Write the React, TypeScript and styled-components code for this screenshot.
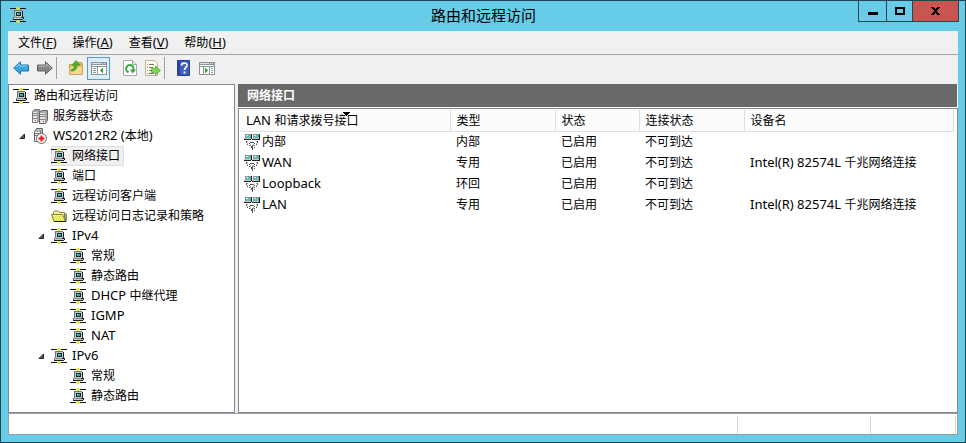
import React from 'react';
import styled, { createGlobalStyle, css } from 'styled-components';

const GlobalStyle = createGlobalStyle`
  *, *::before, *::after { box-sizing: border-box; }
  body {
    margin: 0;
    font-family: "Noto Sans", "Noto Sans CJK SC", sans-serif;
    font-size: 12px;
    line-height: 20px;
    color: #000;
  }
  button { font: inherit; color: inherit; border: 0; padding: 0; background: none; }
`;

const WindowFrame = styled.div`
  display: flex;
  flex-direction: column;
  min-height: 100vh;
  padding: 0 7px 7px;
  background: #66cce8;
  border: 1px solid #23434f;
`;

const TitleBar = styled.header`
  display: grid;
  grid-template-columns: 1fr auto 1fr;
  flex: none;
  height: 30px;
  margin-right: -1px;
`;

const AppIcon = styled.div`
  display: flex;
  padding: 6px 2px;
`;

const Title = styled.h1`
  margin: 0;
  font-size: 15px;
  font-weight: 400;
  line-height: 28px;
`;

const Caption = styled.div`
  display: flex;
  justify-content: flex-end;
  height: 21px;
`;

const CaptionButton = styled.button<{ $width: number; $close?: boolean }>`
  display: flex;
  align-items: center;
  justify-content: center;
  width: ${p => p.$width}px;
  margin-left: -1px;
  border: 1px solid #2b4550;
  border-top: 0;
  background: ${p => (p.$close ? '#c6564f' : 'transparent')};
`;

const Client = styled.div`
  display: flex;
  flex-direction: column;
  flex: 1;
  background: #f0f0f0;
`;

const MenuBar = styled.nav`
  display: flex;
  height: 24px;
  padding-left: 2px;
  border-bottom: 1px solid #a5a5a5;
`;

const MenuButton = styled.button`
  padding: 0 8px;
  line-height: 23px;
`;

const ToolBar = styled.div`
  display: flex;
  align-items: center;
  height: 29px;
  padding: 0 2px 3px;
`;

const ToolGroup = styled.div`
  display: flex;

  & + & { margin-left: 8px; }
`;

const ToolButton = styled.button<{ $pressed?: boolean }>`
  display: flex;
  align-items: center;
  justify-content: center;
  width: 23px;
  height: 23px;
  ${p =>
    p.$pressed &&
    css`
      border: 1px solid #4e9fd0;
      background: #dcecf8;
    `}
`;

const ToolDivider = styled.span`
  width: 1px;
  height: 22px;
  margin-right: 7px;
  background: #a0a0a0;
`;

const Panes = styled.main`
  display: grid;
  grid-template-columns: 227px minmax(0, 1fr);
  gap: 3px;
  flex: 1;
`;

const TreePane = styled.div`
  padding: 1px 0;
  background: #fff;
  border: 1px solid #828790;
`;

const TreeList = styled.ul`
  margin: 0;
  padding: 0;
  list-style: none;
`;

const TreeRow = styled.li<{ $depth: number }>`
  display: flex;
  align-items: center;
  height: 20px;
  padding-left: ${p => (p.$depth === 0 ? 4 : p.$depth * 19 - 15)}px;
`;

const Expander = styled.span`
  display: flex;
  justify-content: center;
  width: 19px;
`;

const TreeLabel = styled.span<{ $selected?: boolean }>`
  display: flex;
  align-items: center;
  gap: 5px;
  height: 20px;
  padding-right: 4px;
  white-space: nowrap;
  background: ${p => (p.$selected ? '#f0f0f0' : 'transparent')};
  box-shadow: ${p => (p.$selected ? 'inset 0 0 0 1px #dedede' : 'none')};
`;

const DetailPane = styled.section`
  display: flex;
  flex-direction: column;
  min-width: 0;
  background: #fff;
`;

const DetailTitle = styled.h2`
  height: 23px;
  margin: 0 1px 1px 0;
  padding-left: 9px;
  font-size: 12px;
  font-weight: 700;
  line-height: 23px;
  color: #fff;
  background: #696969;
`;

const ListView = styled.div`
  flex: 1;
  padding: 1px 3px 0 1px;
  border: 1px solid #828790;
`;

const Table = styled.table`
  width: 100%;
  table-layout: fixed;
  border-collapse: collapse;
`;

const Column = styled.col<{ $width?: number }>`
  width: ${p => (p.$width ? `${p.$width}px` : 'auto')};
`;

const HeadCell = styled.th`
  height: 21px;
  padding: 1px 5px 0 6px;
  font-weight: 400;
  line-height: 19px;
  text-align: left;
  white-space: nowrap;
  background: #fcfcfc;
  border-right: 1px solid #dedfe1;
  border-bottom: 1px solid #dedfe1;
`;

const SortMark = styled.span`
  position: relative;

  svg {
    position: absolute;
    right: 8px;
    top: 0;
  }
`;

const Cell = styled.td`
  height: 21px;
  padding: 0 0 0 6px;
  white-space: nowrap;

  &:first-child { padding-left: 4px; }
`;

const NameCell = styled.span`
  display: flex;
  align-items: center;
  gap: 2px;
`;

const StatusBar = styled.footer`
  display: flex;
  justify-content: flex-end;
  height: 22px;
  padding: 2px 1px 0 0;
  background: #fff;
  border: 1px solid #9a9da1;
`;

const StatusPart = styled.span<{ $width: number }>`
  width: ${p => p.$width}px;
  border-left: 1px solid #d7d7d7;
`;

const Latin = styled.span`
  font-size: 13px;
  line-height: 1;
`;

/* Western runs are set one size larger than the Chinese text around them. */
function Mixed({ text }: { text: string }) {
  return (
    <span>
      {text.split(/([\x20-\x7e]+)/).map((run, i) =>
        i % 2 ? <Latin key={i}>{run}</Latin> : run,
      )}
    </span>
  );
}

const PixelSvg = ({ w = 16, h = 16, children }: { w?: number; h?: number; children: React.ReactNode }) => (
  <svg width={w} height={h} viewBox={`0 0 ${w} ${h}`} shapeRendering="crispEdges" aria-hidden="true">
    {children}
  </svg>
);

const NetIcon = () => (
  <PixelSvg>
    <path fill="#111" d="M0 1h6v1H0zM10 1h6v1h-6zM0 14h6v1H0zM10 14h6v1h-6z" />
    <path fill="#e8e62a" d="M7 0h2v1H7zM6 1h4v1H6zM7 2h2v1H7zM7 13h2v1H7zM6 14h4v1H6zM7 15h2v1H7z" />
    <path fill="#6d7373" d="M4 3h8v1H4zM4 4h1v6H4zM3 10h1v2H3z" />
    <path fill="#222" d="M12 4h1v7h-1zM11 10h1v1h-1zM13 10h1v2h-1zM3 12h10v1H3z" />
    <path fill="#c3c8c8" d="M5 4h7v6H5zM4 10h7v2H4zM11 11h2v1h-2z" />
    <path fill="#888" d="M5 10h6v1H5z" />
    <path fill="#142b2b" d="M6 5h5v4H6z" />
    <path fill="#28aaa8" d="M7 6h3v2H7z" />
    <path fill="#a3e7e4" d="M7 6h1v1H7z" />
  </PixelSvg>
);

const ServersIcon = () => (
  <svg width="16" height="16" viewBox="0 0 16 16" aria-hidden="true">
    <path fill="#a7a7a7" stroke="#777" d="M.5 3.500l2-2h5v11l-2 2h-5z" />
    <path fill="#e7e7e7" d="M1 4h4v10H1z" />
    <path stroke="#888" d="M1 5.500h4M1 7.500h4M1 10.500h4" />
    <path fill="#aaa" stroke="#666" d="M7.500 4.500l2-2h6v10l-2 3h-6z" />
    <path fill="#e2e2e2" d="M8 5h5v10H8z" />
    <path stroke="#888" d="M8 6.500h5M8 8.500h5M8 11.500h5" />
    <path fill="#b43b35" d="M3 12h1v1H3zM11 13h1v1h-1z" />
  </svg>
);

const ServerStopIcon = () => (
  <svg width="16" height="16" viewBox="0 0 16 16" aria-hidden="true">
    <path fill="#b7b7b7" stroke="#666" d="M2.500 3.500l2-3h6v11l-2 2h-6z" />
    <path fill="#eee" d="M3 4h5v9H3z" />
    <path stroke="#777" d="M3 5.500h5M3 7.500h5M8.500 3v4" />
    <circle cx="9.500" cy="10.500" r="5" fill="#fff" stroke="#666" />
    <path fill="#ed1111" d="M8.500 7.500h2v2h2v2h-2v2h-2v-2h-2v-2h2z" />
  </svg>
);

const FolderIcon = () => (
  <svg width="16" height="16" viewBox="0 0 16 16" aria-hidden="true">
    <path fill="#f5f0a4" stroke="#8a852c" d="M2.500 12.500v-8l1-1.500h4l1 1.500h5v8z" />
    <path fill="#e5df60" stroke="#8a852c" d="M.5 6.500h11l3 7H3z" />
    <path fill="none" stroke="#222" d="M3 13.500h12v-8" />
    <path fill="none" stroke="#fffde0" strokeDasharray="1 1" d="M2 7.500h9M3 9.500h9M4 11.500h9" />
  </svg>
);

const AdapterIcon = () => (
  <PixelSvg>
    <path fill="#8a9494" d="M1 0h6v4H1zM9 0h6v4H9z" />
    <path fill="#52c5c3" d="M2 1h4v3H2zM10 1h4v3h-4z" />
    <path fill="#c9f1ef" d="M2 1h2v1H2zM10 1h2v1h-2z" />
    <path fill="#c9c9c9" d="M0 4h7v1H0zM8 4h7v1H8z" />
    <path fill="#222" d="M7 0h1v5H7zM15 0h1v6h-1zM0 5h7v1H0zM8 5h8v1H8z" />
    <path fill="#555" d="M2 7h1v2H2zM13 7h1v2h-1zM3 10h1v1H3zM12 10h1v1h-1zM5 11h1v1H5zM10 11h1v1h-1zM6 8h4v1H6zM5 9h1v1H5zM10 9h1v1h-1zM8 11h1v5H8zM7 12h1v2H7zM10 13h1v1h-1z" />
    <path fill="#aaa" d="M3 7h1v1H3zM12 7h1v1h-1zM3 9h1v1H3zM12 9h1v1h-1zM6 10h1v2H6zM9 10h1v2H9z" />
  </PixelSvg>
);

const ArrowIcon = ({ forward }: { forward?: boolean }) => (
  <svg width="17" height="14" viewBox="0 0 17 14" aria-hidden="true">
    <g transform={forward ? 'matrix(-1 0 0 1 17 0)' : undefined}>
      <path
        fill={forward ? '#858585' : '#37a5df'}
        stroke={forward ? '#606060' : '#2274ad'}
        strokeLinejoin="round"
        d="M.7 7L7.500.800v3.200h8v6h-8v3.200z"
      />
      <path fill="none" stroke={forward ? '#bbb' : '#8ed7f7'} d="M2.500 6.500L6.500 3v2h8" />
    </g>
  </svg>
);

const UpFolderIcon = () => (
  <svg width="16" height="16" viewBox="0 0 16 16" aria-hidden="true">
    <path fill="#e0b95c" stroke="#c9a45a" d="M1.500 14.500v-10h7l1-2h4l1 2v10z" />
    <path fill="#f3d88f" d="M2 7h12v7H2z" />
    <path fill="#47b72d" stroke="#2c8720" strokeWidth=".6" d="M3 10c3-1 3.500-3 3.500-5H4l4-4.500L12 5H9c0 4-2 6-6 6z" />
  </svg>
);

const ConsoleIcon = ({ right }: { right?: boolean }) => (
  <PixelSvg h={13}>
    <path fill="#8b959c" d="M0 0h16v13H0z" />
    <path fill="#fff" d="M1 5h14v7H1zM1 3h14v1H1z" />
    <path fill="#dce4e9" d="M1 1h9v1H1zM11 1h1v1h-1zM13 1h1v1h-1z" />
    {right ? (
      <>
        <path fill="#8b959c" d="M4 5h1v7H4zM10 5h1v7h-1zM12 6h2v1h-2zM12 8h2v1h-2zM12 10h2v1h-2z" />
        <path fill="#35a936" d="M6 6h1v5H6zM7 7h1v3H7zM8 8h1v1H8z" />
      </>
    ) : (
      <>
        <path fill="#8b959c" d="M6 5h1v7H6zM2 6h3v1H2zM2 8h3v1H2zM2 10h3v1H2z" />
        <path fill="#35a936" d="M11 6h1v5h-1zM10 7h1v3h-1zM9 8h1v1H9z" />
      </>
    )}
  </PixelSvg>
);

const RefreshIcon = () => (
  <svg width="14" height="16" viewBox="0 0 14 16" aria-hidden="true">
    <path fill="#fff" stroke="#aaa" d="M.5.500h9l4 4v11H.5z" />
    <path fill="#ddd" stroke="#aaa" d="M9.500.500v4h4" />
    <path fill="none" stroke="#35a83a" strokeWidth="2" d="M5.500 12.200a3.700 3.700 0 1 1 4.800-2.200" />
    <path fill="#35a83a" d="M7 9.500h6L9.500 13.500z" />
  </svg>
);

const ExportIcon = () => (
  <svg width="16" height="16" viewBox="0 0 16 16" aria-hidden="true">
    <path fill="#fffbea" stroke="#bbb49c" d="M.5.500h9l3 3v12H.5z" />
    <path stroke="#777" d="M4 4.500h5M4 7.500h4M4 10.500h4M4 13.500h5" />
    <path stroke="#a49c6b" d="M2 4.500h1M2 7.500h1M2 10.500h1M2 13.500h1" />
    <path fill="#7bd650" stroke="#46a82f" strokeWidth=".7" d="M6.500 8.500h4V6l5 4.500-5 4.500v-2.500h-4z" />
  </svg>
);

const HelpIcon = () => (
  <svg width="13" height="16" viewBox="0 0 13 16" aria-hidden="true">
    <path fill="#3c5fc4" stroke="#263f91" d="M.5.500h12v15H.5z" />
    <path fill="#294798" d="M1 1h2v14H1z" />
    <path fill="none" stroke="#fff" strokeWidth="1.700" d="M4.500 5.500C4.500 2.500 10 2.300 10 5.300c0 2-2.500 2.200-2.500 4.700M7.500 11.500v2" />
  </svg>
);

const ExpandedMark = () => (
  <svg width="7" height="7" viewBox="0 0 7 7" aria-hidden="true">
    <path fill="#595959" stroke="#262626" d="M5.500 1v4.500H1z" />
  </svg>
);

const menus = [
  ['文件', 'F'],
  ['操作', 'A'],
  ['查看', 'V'],
  ['帮助', 'H'],
];

type Node = { label: string; depth: number; icon?: () => React.ReactElement; open?: boolean; selected?: boolean };

const nodes: Node[] = [
  { label: '路由和远程访问', depth: 0 },
  { label: '服务器状态', depth: 1, icon: ServersIcon },
  { label: 'WS2012R2 (本地)', depth: 1, icon: ServerStopIcon, open: true },
  { label: '网络接口', depth: 2, selected: true },
  { label: '端口', depth: 2 },
  { label: '远程访问客户端', depth: 2 },
  { label: '远程访问日志记录和策略', depth: 2, icon: FolderIcon },
  { label: 'IPv4', depth: 2, open: true },
  { label: '常规', depth: 3 },
  { label: '静态路由', depth: 3 },
  { label: 'DHCP 中继代理', depth: 3 },
  { label: 'IGMP', depth: 3 },
  { label: 'NAT', depth: 3 },
  { label: 'IPv6', depth: 2, open: true },
  { label: '常规', depth: 3 },
  { label: '静态路由', depth: 3 },
];

const columns = [
  { label: 'LAN 和请求拨号接口', width: 210, sorted: true },
  { label: '类型', width: 105 },
  { label: '状态', width: 84 },
  { label: '连接状态', width: 105 },
  { label: '设备名' },
];

const rows = [
  ['内部', '内部', '已启用', '不可到达', ''],
  ['WAN', '专用', '已启用', '不可到达', 'Intel(R) 82574L 千兆网络连接'],
  ['Loopback', '环回', '已启用', '不可到达', ''],
  ['LAN', '专用', '已启用', '不可到达', 'Intel(R) 82574L 千兆网络连接'],
];

export default function App() {
  return (
    <>
      <GlobalStyle />
      <WindowFrame>
        <TitleBar>
          <AppIcon><NetIcon /></AppIcon>
          <Title>路由和远程访问</Title>
          <Caption>
            <CaptionButton $width={29} aria-label="最小化">
              <PixelSvg w={10} h={10}><path d="M0 6h10v3H0z" /></PixelSvg>
            </CaptionButton>
            <CaptionButton $width={27} aria-label="最大化">
              <PixelSvg w={10} h={8}><path fillRule="evenodd" d="M0 0h10v8H0zM2 2v4h6V2z" /></PixelSvg>
            </CaptionButton>
            <CaptionButton $width={47} $close aria-label="关闭">
              <PixelSvg w={9} h={8}>
                <path d="M0 0h3v1H0zM6 0h3v1H6zM1 1h3v1H1zM5 1h3v1H5zM2 2h5v1H2zM3 3h3v2H3zM2 5h5v1H2zM1 6h3v1H1zM5 6h3v1H5zM0 7h3v1H0zM6 7h3v1H6z" />
              </PixelSvg>
            </CaptionButton>
          </Caption>
        </TitleBar>
        <Client>
          <MenuBar>
            {menus.map(([name, key]) => (
              <MenuButton key={key}>{name}<Latin>(<u>{key}</u>)</Latin></MenuButton>
            ))}
          </MenuBar>
          <ToolBar>
            <ToolGroup>
              <ToolButton aria-label="后退"><ArrowIcon /></ToolButton>
              <ToolButton aria-label="前进"><ArrowIcon forward /></ToolButton>
            </ToolGroup>
            <ToolDivider />
            <ToolGroup>
              <ToolButton aria-label="上一级"><UpFolderIcon /></ToolButton>
              <ToolButton $pressed aria-label="显示/隐藏控制台树"><ConsoleIcon /></ToolButton>
            </ToolGroup>
            <ToolGroup>
              <ToolButton aria-label="刷新"><RefreshIcon /></ToolButton>
              <ToolButton aria-label="导出列表"><ExportIcon /></ToolButton>
            </ToolGroup>
            <ToolDivider />
            <ToolGroup>
              <ToolButton aria-label="帮助"><HelpIcon /></ToolButton>
              <ToolButton aria-label="显示/隐藏操作窗格"><ConsoleIcon right /></ToolButton>
            </ToolGroup>
          </ToolBar>
          <Panes>
            <TreePane>
              <TreeList>
                {nodes.map((node, i) => {
                  const Icon = node.icon ?? NetIcon;
                  return (
                    <TreeRow key={i} $depth={node.depth}>
                      {node.depth > 0 && <Expander>{node.open && <ExpandedMark />}</Expander>}
                      <TreeLabel $selected={node.selected}>
                        <Icon />
                        <Mixed text={node.label} />
                      </TreeLabel>
                    </TreeRow>
                  );
                })}
              </TreeList>
            </TreePane>
            <DetailPane>
              <DetailTitle>网络接口</DetailTitle>
              <ListView>
                <Table>
                  <colgroup>
                    {columns.map(c => <Column key={c.label} $width={c.width} />)}
                  </colgroup>
                  <thead>
                    <tr>
                      {columns.map(c => (
                        <HeadCell key={c.label} scope="col">
                          {c.sorted ? (
                            <SortMark>
                              <Mixed text={c.label} />
                              <PixelSvg w={7} h={4}><path d="M0 0h7v1H0zM1 1h5v1H1zM2 2h3v1H2zM3 3h1v1H3z" /></PixelSvg>
                            </SortMark>
                          ) : c.label}
                        </HeadCell>
                      ))}
                    </tr>
                  </thead>
                  <tbody>
                    {rows.map(row => (
                      <tr key={row[0]}>
                        {row.map((value, i) => (
                          <Cell key={i}>
                            {i === 0 ? <NameCell><AdapterIcon /><Mixed text={value} /></NameCell> : <Mixed text={value} />}
                          </Cell>
                        ))}
                      </tr>
                    ))}
                  </tbody>
                </Table>
              </ListView>
            </DetailPane>
          </Panes>
          <StatusBar>
            <StatusPart $width={133} />
            <StatusPart $width={85} />
            <StatusPart $width={1} />
          </StatusBar>
        </Client>
      </WindowFrame>
    </>
  );
}
